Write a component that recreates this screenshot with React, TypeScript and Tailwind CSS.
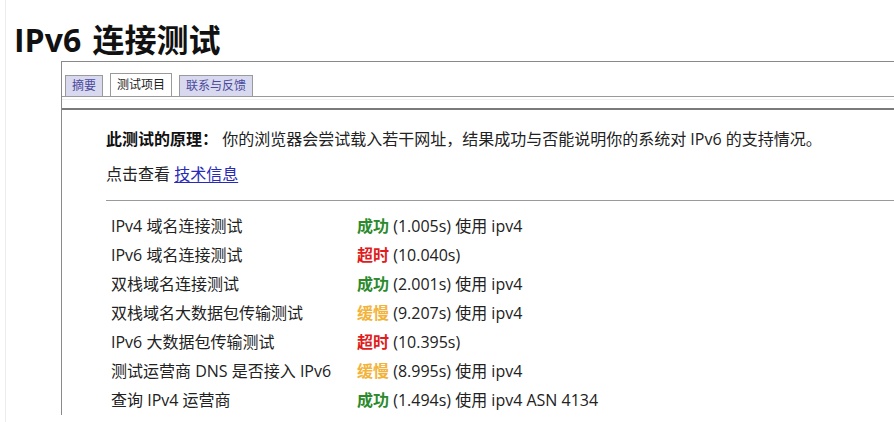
import React from 'react'

type Status = 'ok' | 'timeout' | 'slow'

interface Row {
    label: string;
    status: Status;
    detail: string;
}

const rows: Row[] = [
    { label: 'IPv4 域名连接测试', status: 'ok', detail: '(1.005s) 使用 ipv4' },
    { label: 'IPv6 域名连接测试', status: 'timeout', detail: '(10.040s)' },
    { label: '双栈域名连接测试', status: 'ok', detail: '(2.001s) 使用 ipv4' },
    { label: '双栈域名大数据包传输测试', status: 'slow', detail: '(9.207s) 使用 ipv4' },
    { label: 'IPv6 大数据包传输测试', status: 'timeout', detail: '(10.395s)' },
    { label: '测试运营商 DNS 是否接入 IPv6', status: 'slow', detail: '(8.995s) 使用 ipv4' },
    { label: '查询 IPv4 运营商', status: 'ok', detail: '(1.494s) 使用 ipv4 ASN 4134' },
]

const StatusWord = ({ status }: { status: Status }) => {
    if (status === 'ok') return <span className="font-bold text-[#2b8a2b]">成功</span>
    if (status === 'timeout') return <span className="font-bold text-[#e01c1c]">超时</span>
    return <span className="font-bold text-[#f2b33a]">缓慢</span>
}

const tabs = [
    { name: '摘要', active: false },
    { name: '测试项目', active: true },
    { name: '联系与反馈', active: false },
]

const App = () => {
    return (
        <div className="w-[894px] h-[422px] overflow-hidden bg-white pl-[5px] font-['Open_Sans','Noto_Sans_CJK_SC',sans-serif] text-[#222]">
            <div className="h-full border-l border-[#ededed]">
                <h1 className="pt-[20px] pl-[8px] text-[32px] leading-[40px] font-bold text-[#111]">
                    IPv6 <span className="ml-[3px]">连接测试</span>
                </h1>

                <div className="ml-[55px] mt-[1px] border-l border-t border-[#8a8a8a]">
                    {/* tabs */}
                    <div className="flex items-end gap-[7px] pl-[3px] pt-[11px] border-b border-[#9a9a9a]">
                        {tabs.map(tab => (
                            tab.active ? (
                                <div key={tab.name} className="h-[23px] px-[6px] border border-b-0 border-[#9a9a9a] bg-white text-[12px] leading-[22px] text-[#222]">
                                    {tab.name}
                                </div>
                            ) : (
                                <div key={tab.name} className="h-[21px] px-[6px] border border-b-0 border-[#9a9a9a] bg-[#d8d8ef] text-[12px] leading-[20px] text-[#4a4a9c]">
                                    {tab.name}
                                </div>
                            )
                        ))}
                    </div>
                    <div className="h-[3px] border-b border-[#efefef]"></div>
                    <div className="h-[8px]"></div>

                    {/* panel */}
                    <div className="border-t-2 border-[#7a7a7a] pl-[44px] pt-[17px] text-[16px]">
                        <p className="leading-[24px]">
                            <span className="font-bold text-[#111]">此测试的原理：</span> 你的浏览器会尝试载入若干网址，结果成功与否能说明你的系统对 IPv6 的支持情况。
                        </p>
                        <p className="mt-[11px] leading-[24px]">
                            点击查看 <a className="text-[#2a2ab8] underline underline-offset-2">技术信息</a>
                        </p>
                        <div className="mt-[14px] border-t border-[#9a9a9a]"></div>

                        <div className="mt-[11px] pl-[5px]">
                            {rows.map(row => (
                                <div key={row.label} className="flex leading-[29px]">
                                    <div className="w-[246px] shrink-0">{row.label}</div>
                                    <div>
                                        <StatusWord status={row.status} /> {row.detail}
                                    </div>
                                </div>
                            ))}
                        </div>
                    </div>
                </div>
            </div>
        </div>
    )
}

export default App
